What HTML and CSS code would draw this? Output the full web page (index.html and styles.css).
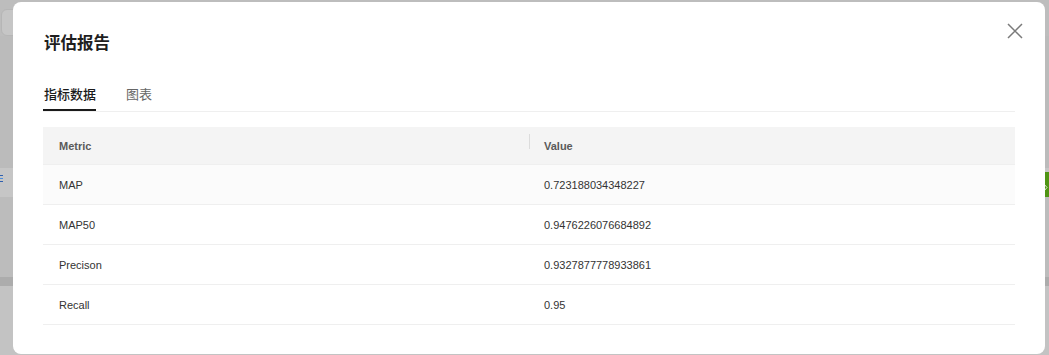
FILE: index.html
```html
<!DOCTYPE html>
<html lang="zh-CN">
<head>
<meta charset="utf-8">
<title>评估报告</title>
<link rel="stylesheet" href="styles.css">
</head>
<body>
<div class="page">
  <div class="bg-gap-top"></div>
  <div class="bg-box"></div>
  <div class="bg-fill bg-fill-a"></div>
  <div class="bg-band">
    <span class="bg-link"><i></i><i></i><i></i></span>
    <span class="bg-green">
      <svg width="5" height="31" viewBox="0 0 5 31"><path d="M0 12 L3 15.5 L0 19" stroke="#dfe9d2" stroke-width="1" fill="none"/></svg>
    </span>
  </div>
  <div class="bg-fill bg-fill-b"></div>
  <div class="bg-dark"></div>
  <div class="bg-rest"></div>
</div>

<div class="modal">
  <svg class="close" width="16" height="16" viewBox="0 0 16 16" aria-label="close">
    <path d="M1 1 L15 15 M15 1 L1 15" stroke="#7a7a7a" stroke-width="1.5" fill="none"/>
  </svg>
  <h2 class="title">评估报告</h2>
  <div class="tabs">
    <div class="tab active">指标数据</div>
    <div class="tab">图表</div>
  </div>
  <div class="table">
    <div class="tr th">
      <div class="td">Metric</div>
      <div class="td sep">Value</div>
    </div>
    <div class="tr hover">
      <div class="td">MAP</div>
      <div class="td">0.723188034348227</div>
    </div>
    <div class="tr">
      <div class="td">MAP50</div>
      <div class="td">0.9476226076684892</div>
    </div>
    <div class="tr">
      <div class="td">Precison</div>
      <div class="td">0.9327877778933861</div>
    </div>
    <div class="tr">
      <div class="td">Recall</div>
      <div class="td">0.95</div>
    </div>
  </div>
</div>
</body>
</html>
```

FILE: styles.css
```css
* { box-sizing: border-box; }
html, body {
  margin: 0;
  padding: 0;
  width: 1049px;
  height: 355px;
  overflow: hidden;
  background: #bdbdbd;
  font-family: "Liberation Sans", "Noto Sans CJK SC", sans-serif;
}

.page {
  display: flex;
  flex-direction: column;
  height: 355px;
}
.bg-gap-top { height: 9px; background: #bdbdbd; }
.bg-box {
  height: 27px;
  margin-left: 1px;
  width: 200px;
  background: #c6c6c6;
  border: 1px solid #b6b6b6;
  border-radius: 6px;
}
.bg-fill-a { height: 132px; background: #bbbbbb; }
.bg-band {
  height: 29px;
  background: #c6c6c6;
  display: flex;
  align-items: flex-start;
  justify-content: space-between;
}
.bg-link {
  display: flex;
  flex-direction: column;
  gap: 2px;
  margin-top: 7px;
}
.bg-link i {
  display: block;
  width: 3px;
  height: 1px;
  background: #2f5fae;
}
.bg-link i:nth-child(2) { background: #4d8fdc; }
.bg-green {
  width: 5px;
  height: 31px;
  margin-top: 4px;
  background: #4f9414;
  display: block;
}
.bg-green svg { display: block; }
.bg-fill-b { height: 80px; background: #bcbcbc; }
.bg-dark { height: 9px; background: #acacac; }
.bg-rest { flex: 1; background: #c3c3c3; }

.modal {
  position: absolute;
  left: 13px;
  top: 2px;
  width: 1032px;
  height: 352px;
  background: #ffffff;
  border-radius: 8px;
  padding: 29px 30px 0 30px;
}
.close {
  position: absolute;
  top: 21px;
  right: 22px;
}
.title {
  margin: 0 0 0 1px;
  font-size: 16.5px;
  line-height: 24px;
  font-weight: 700;
  color: #1f1f1f;
}
.tabs {
  margin-top: 17px;
  display: flex;
  gap: 29px;
  border-bottom: 1px solid #efefef;
}
.tab {
  font-size: 13px;
  line-height: 20px;
  padding: 13px 0 4px 1px;
  color: #666666;
  border-bottom: 2px solid transparent;
}
.tab.active {
  color: #1a1a1a;
  font-weight: 500;
  border-bottom-color: #1a1a1a;
  width: 53px;
}

.table {
  margin-top: 15px;
  font-size: 11px;
  color: #333333;
}
.tr {
  display: grid;
  grid-template-columns: 486px 486px;
  height: 40px;
  border-bottom: 1px solid #efefef;
  align-items: center;
}
.tr.th {
  height: 38px;
  background: #f4f4f4;
  font-weight: 700;
  color: #5a5a5a;
}
.tr.hover { background: #fbfbfb; }
.td {
  padding: 0 16px 0 16px;
  position: relative;
}
.td:nth-child(2) { padding-left: 15px; }
.td.sep::before {
  content: "";
  position: absolute;
  left: 0;
  top: -6px;
  width: 1px;
  height: 15px;
  background: #dcdcdc;
}
```
